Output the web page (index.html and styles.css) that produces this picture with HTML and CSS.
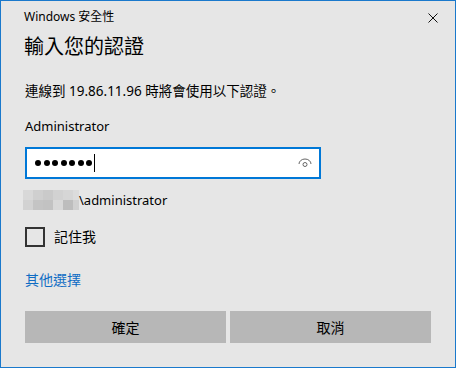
FILE: index.html
```html
<!DOCTYPE html>
<html lang="zh-Hant">
<head>
<meta charset="utf-8">
<title>Windows 安全性</title>
<link rel="stylesheet" href="styles.css">
</head>
<body>
<div class="dialog">
  <div class="titlebar">
    <span class="title">Windows 安全性</span>
    <svg class="close" width="10" height="10" viewBox="0 0 10 10" aria-label="關閉">
      <path d="M0.5 0.5 L9.5 9.5 M9.5 0.5 L0.5 9.5" stroke="#111" stroke-width="1" fill="none"/>
    </svg>
  </div>
  <h1 class="heading">輸入您的認證</h1>
  <p class="info">連線到 19.86.11.96 時將會使用以下認證。</p>
  <div class="user">Administrator</div>
  <div class="field">
    <div class="dots">
      <span class="dot"></span><span class="dot"></span><span class="dot"></span><span class="dot"></span><span class="dot"></span><span class="dot"></span><span class="dot"></span><span class="caret"></span>
    </div>
    <svg class="eye" width="14" height="10" viewBox="0 0 14 10">
      <path d="M1 6 A6 5 0 0 1 13 6" stroke="#666" stroke-width="1" fill="none"/>
      <circle cx="7" cy="6.5" r="2" stroke="#666" stroke-width="1" fill="none"/>
    </svg>
  </div>
  <div class="domain">
    <div class="mosaic">
      <span class="m1"></span><span class="m2"></span><span class="m3"></span><span class="m4"></span><span class="m5"></span><span class="m6"></span>
      <span class="m7"></span><span class="m8"></span><span class="m9"></span><span class="m10"></span><span class="m11"></span><span class="m12"></span>
    </div>
    <span class="domain-text">\administrator</span>
  </div>
  <label class="remember">
    <span class="box"></span>
    <span class="remember-text">記住我</span>
  </label>
  <a class="more" href="#">其他選擇</a>
  <div class="buttons">
    <button class="btn">確定</button>
    <button class="btn">取消</button>
  </div>
</div>
</body>
</html>
```

FILE: styles.css
```css
html, body {
  margin: 0;
  padding: 0;
  background: #e6e6e6;
}

.dialog {
  box-sizing: border-box;
  width: 456px;
  height: 368px;
  border: 1px solid #1a79cc;
  background: #e6e6e6;
  padding: 0 24px 0 24px;
  font-family: "Noto Sans", "Noto Sans CJK TC", sans-serif;
  color: #000;
  display: flex;
  flex-direction: column;
  align-items: flex-start;
}

.titlebar {
  align-self: stretch;
  display: flex;
  justify-content: space-between;
  align-items: center;
  margin-top: 8px;
  height: 16px;
}

.title {
  font-size: 12px;
  line-height: 16px;
  margin-left: -1px;
}

.close {
  margin-right: -7px;
  margin-top: 2px;
}

.heading {
  margin: 8px 0 0 -1px;
  font-size: 20px;
  line-height: 28px;
  font-weight: normal;
}

.info {
  margin: 20px 0 0;
  font-size: 13.5px;
  line-height: 20px;
}

.user {
  margin-top: 15px;
  font-size: 13px;
  line-height: 20px;
}

.field {
  box-sizing: border-box;
  margin-top: 11px;
  width: 296px;
  height: 32px;
  border: 2px solid #0078d7;
  background: #fff;
  display: flex;
  align-items: center;
  justify-content: space-between;
  padding: 0 7px 0 8px;
}

.dots {
  display: flex;
  align-items: center;
  gap: 2.5px;
}

.dot {
  width: 6px;
  height: 6px;
  border-radius: 50%;
  background: #000;
}

.caret {
  width: 1px;
  height: 18px;
  background: #000;
  margin-left: -1px;
}

.domain {
  margin: 11px 0 0 -2px;
  display: flex;
  align-items: center;
  height: 20px;
}

.mosaic {
  display: grid;
  grid-template-columns: repeat(5, 10px) 6px;
  grid-template-rows: 10px 10px;
}

.m1 { background: #d8d8d8; }
.m2 { background: #cfcfcf; }
.m3 { background: #cacaca; }
.m4 { background: #d2d2d2; }
.m5 { background: #d6d6d6; }
.m6 { background: #dcdcdc; }
.m7 { background: #d2d2d2; }
.m8 { background: #c4c4c4; }
.m9 { background: #c2c2c2; }
.m10 { background: #d8d8d8; }
.m11 { background: #bdbdbd; }
.m12 { background: #d0d0d0; }

.domain-text {
  font-size: 13px;
  line-height: 20px;
}

.remember {
  margin-top: 17px;
  display: flex;
  align-items: center;
  gap: 9px;
}

.box {
  box-sizing: border-box;
  width: 20px;
  height: 20px;
  border: 2px solid #333;
}

.remember-text {
  font-size: 14px;
  line-height: 20px;
}

.more {
  margin-top: 23px;
  font-size: 14px;
  line-height: 20px;
  color: #0f6cc4;
  text-decoration: none;
}

.buttons {
  align-self: stretch;
  margin-top: 21px;
  display: grid;
  grid-template-columns: 1fr 1fr;
  gap: 4px;
}

.btn {
  height: 32px;
  border: none;
  background: #b7b7b7;
  font-family: "Noto Sans", "Noto Sans CJK TC", sans-serif;
  font-size: 14px;
  color: #000;
  padding: 0;
}
```
